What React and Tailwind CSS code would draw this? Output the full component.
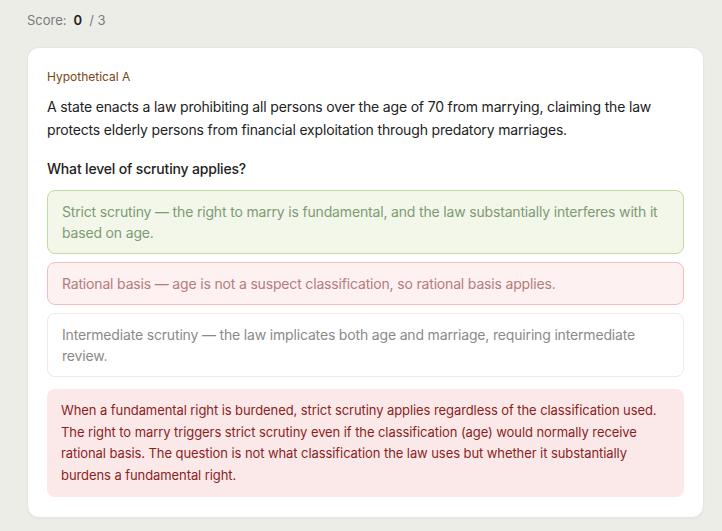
import React from "react";

const options = [
  {
    text: "Strict scrutiny — the right to marry is fundamental, and the law substantially interferes with it based on age.",
    cls: "bg-[#f2f7ea] border-[#bedc9e] text-[#7f9a74]",
  },
  {
    text: "Rational basis — age is not a suspect classification, so rational basis applies.",
    cls: "bg-[#fdf1f1] border-[#f4bdbd] text-[#b57c7c]",
  },
  {
    text: "Intermediate scrutiny — the law implicates both age and marriage, requiring intermediate review.",
    cls: "bg-white border-[#ebebeb] text-[#8a8a8a]",
  },
];

const App = () => {
  return (
    <div
      className="min-h-[531px] bg-[#edede8] pl-[27px] pr-[18px] pt-[11px]"
      style={{ fontFamily: "Inter, 'Noto Sans', sans-serif" }}
    >
      {/* score */}
      <div className="flex items-center h-[20px] text-[13px] text-[#7a7a7a]">
        <span>Score:</span>
        <span className="ml-[7px] font-semibold text-[#1f1f1f]">0</span>
        <span className="ml-[7px]">/ 3</span>
      </div>

      <div className="mt-[16px] bg-white rounded-[12px] border border-[#e6e5e0] shadow-[0_1px_2px_rgba(0,0,0,0.04)] px-[19px] pt-[20px] pb-[20px]">
        <div className="text-[12px] leading-[18px] text-[#7b4611]">Hypothetical A</div>
        <p className="mt-[9px] text-[14px] leading-[23px] tracking-[-0.17px] text-[#222]">
          A state enacts a law prohibiting all persons over the age of 70 from marrying, claiming the law
          protects elderly persons from financial exploitation through predatory marriages.
        </p>
        <div className="mt-[18px] text-[14px] leading-[20px] font-medium tracking-[-0.17px] text-[#222]">
          What level of scrutiny applies?
        </div>

        <div className="mt-[11px] flex flex-col gap-[8px]">
          {options.map((o, i) => (
            <div
              key={i}
              className={"border rounded-[8px] px-[14px] py-[10px] text-[14px] leading-[21px] tracking-[-0.17px] " + o.cls}
            >
              {o.text}
            </div>
          ))}
        </div>

        <div className="mt-[12px] bg-[#fbe9e9] rounded-[8px] px-[14px] py-[11px] text-[13px] leading-[21.5px] tracking-[-0.08px] text-[#8c1d1d]">
          When a fundamental right is burdened, strict scrutiny applies regardless of the classification used.
          The right to marry triggers strict scrutiny even if the classification (age) would normally receive
          rational basis. The question is not what classification the law uses but whether it substantially
          burdens a fundamental right.
        </div>
      </div>
    </div>
  );
};

export default App;
